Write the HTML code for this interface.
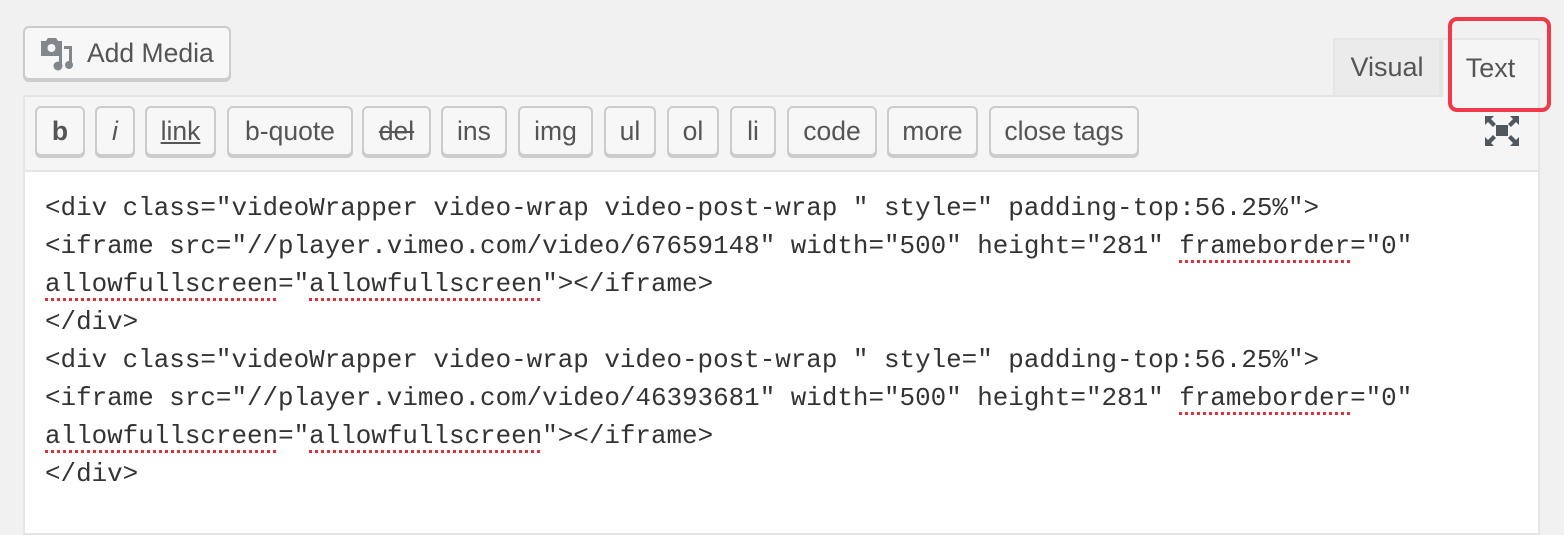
<!DOCTYPE html>
<html><head><meta charset="utf-8"><style>
body{margin:0;width:1564px;height:526px;background:#f1f1f1;position:relative;overflow:hidden;font-family:"Liberation Sans",sans-serif;}
.btn{position:absolute;box-sizing:border-box;border:2px solid #ccc;border-radius:6px;background:#f7f7f7;box-shadow:0 2px 0 #ccc;color:#555;font-size:26.5px;display:flex;align-items:center;justify-content:center;}
#editor{position:absolute;left:23px;top:95px;width:1517px;height:440px;box-sizing:border-box;border:2px solid #e5e5e5;background:#fff;}
#tb{position:absolute;left:0;top:0;right:0;height:73px;background:#f5f5f5;border-bottom:2px solid #e5e5e5;}
.tb{top:11px;height:50px;}
#code{position:absolute;left:45px;top:189px;font-family:"Liberation Mono",monospace;font-size:25.9px;line-height:38px;color:#333;white-space:pre;}
.sp{text-decoration:underline dotted #e0303a;text-decoration-thickness:3px;text-underline-offset:7px;}
</style></head><body>
<div class="btn" style="left:23px;top:26px;width:208px;height:54px;justify-content:flex-start;padding-left:14px;">
<svg width="36" height="36" viewBox="0 0 36 36" style="margin-right:12px"><path d="M2 6h5l2-3h8l2 3h4v15H2z" fill="#82878c"/><circle cx="12.5" cy="13" r="4" fill="#f7f7f7"/><path d="M25 11h8v20h-3V14h-5z" fill="#82878c"/><circle cx="30" cy="30" r="4" fill="#82878c"/><circle cx="19" cy="31" r="4.5" fill="#82878c"/><rect x="20" y="20" width="3" height="11" fill="#82878c"/></svg>Add Media</div>
<div style="position:absolute;left:1333px;top:38px;width:108px;height:57px;background:#ebebeb;border:2px solid #e5e5e5;box-sizing:border-box;border-bottom:none;color:#555;font-size:27px;display:flex;align-items:center;justify-content:center;">Visual</div>
<div style="position:absolute;left:1441px;top:38px;width:99px;height:59px;background:#f5f5f5;border:2px solid #e5e5e5;border-bottom:none;box-sizing:border-box;color:#555;font-size:27px;display:flex;align-items:center;justify-content:center;z-index:2">Text</div>
<div id="editor"><div id="tb"></div></div>
<div class="btn tb" style="left:35px;top:106px;width:50px;font-weight:bold">b</div>
<div class="btn tb" style="left:95px;top:106px;width:40px;font-style:italic">i</div>
<div class="btn tb" style="left:145px;top:106px;width:71px;text-decoration:underline">link</div>
<div class="btn tb" style="left:227px;top:106px;width:126px">b-quote</div>
<div class="btn tb" style="left:362px;top:106px;width:69px;text-decoration:line-through">del</div>
<div class="btn tb" style="left:441px;top:106px;width:66px">ins</div>
<div class="btn tb" style="left:518px;top:106px;width:75px">img</div>
<div class="btn tb" style="left:604px;top:106px;width:52px">ul</div>
<div class="btn tb" style="left:667px;top:106px;width:52px">ol</div>
<div class="btn tb" style="left:730px;top:106px;width:46px">li</div>
<div class="btn tb" style="left:787px;top:106px;width:90px">code</div>
<div class="btn tb" style="left:887px;top:106px;width:91px">more</div>
<div class="btn tb" style="left:989px;top:106px;width:150px">close tags</div>
<svg style="position:absolute;left:1485px;top:116px" width="34" height="30" viewBox="0 0 34 30"><rect x="11" y="9" width="12" height="11" fill="#50575e"/><path d="M0 0h9l-3 3 5 5-3 3-5-5-3 3z" fill="#50575e"/><path d="M34 0h-9l3 3-5 5 3 3 5-5 3 3z" fill="#50575e"/><path d="M0 30h9l-3-3 5-5-3-3-5 5-3-3z" fill="#50575e"/><path d="M34 30h-9l3-3-5-5 3-3 5 5 3-3z" fill="#50575e"/></svg>
<div id="code">&lt;div class="videoWrapper video-wrap video-post-wrap " style=" padding-top:56.25%"&gt;
&lt;iframe src="//player.vimeo.com/video/67659148" width="500" height="281" <span class="sp">frameborder</span>="0"
<span class="sp">allowfullscreen</span>="<span class="sp">allowfullscreen</span>"&gt;&lt;/iframe&gt;
&lt;/div&gt;
&lt;div class="videoWrapper video-wrap video-post-wrap " style=" padding-top:56.25%"&gt;
&lt;iframe src="//player.vimeo.com/video/46393681" width="500" height="281" <span class="sp">frameborder</span>="0"
<span class="sp">allowfullscreen</span>="<span class="sp">allowfullscreen</span>"&gt;&lt;/iframe&gt;
&lt;/div&gt;</div>
<div style="position:absolute;left:1448px;top:17px;width:103px;height:95px;box-sizing:border-box;border:4px solid #ef3a4c;border-radius:9px;z-index:5"></div>
</body></html>
